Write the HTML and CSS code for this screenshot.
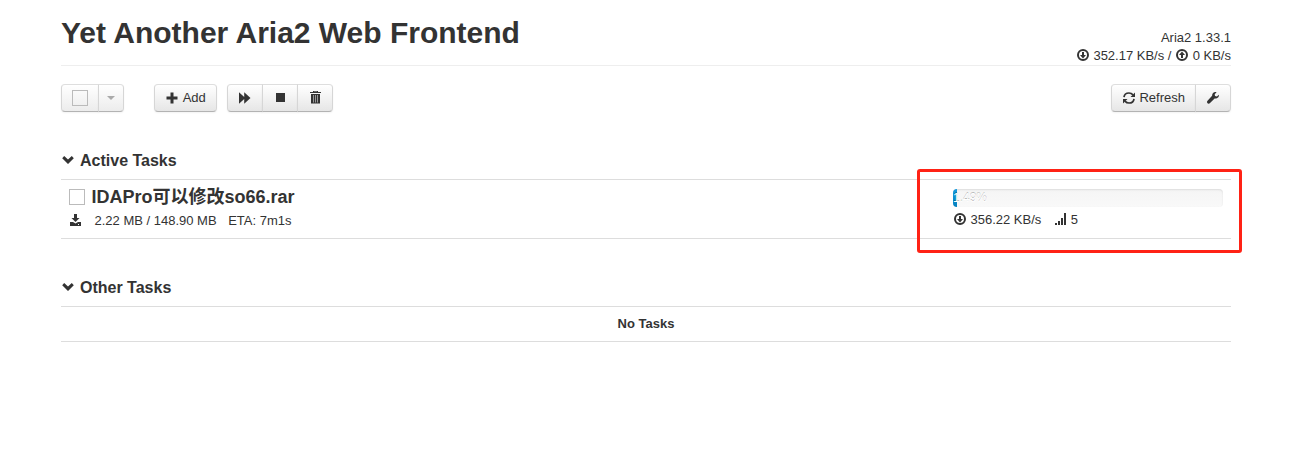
FILE: index.html
```
<!DOCTYPE html>
<html lang="en">
<head>
<meta charset="utf-8">
<title>Yet Another Aria2 Web Frontend</title>
<link rel="stylesheet" href="styles.css">
</head>
<body>
<svg class="defs" aria-hidden="true">
  <symbol id="down-circle" viewBox="0 0 14 14"><circle cx="7" cy="7" r="5" fill="none" stroke="currentColor" stroke-width="2"/><path d="M6 4h2v3h2l-3 3.400L4 7h2z"/></symbol>
  <symbol id="up-circle" viewBox="0 0 14 14"><circle cx="7" cy="7" r="5" fill="none" stroke="currentColor" stroke-width="2"/><path d="M6 10h2V7h2L7 3.600 4 7h2z"/></symbol>
  <symbol id="plus" viewBox="0 0 14 14"><path d="M5.500 1.500h3v4h4v3h-4v4h-3v-4h-4v-3h4z"/></symbol>
  <symbol id="forward" viewBox="0 0 14 14"><path d="M1 1.200 6.200 6V1.200L12.500 7l-6.300 5.800V8L1 12.800z"/></symbol>
  <symbol id="stop" viewBox="0 0 14 14"><path d="M3 2h9v9H3z"/></symbol>
  <symbol id="trash" viewBox="0 0 14 14"><path d="M5 0h5v1h3v1H2V1h3z"/><path fill="#eee" d="M6 .700h3V1H6z"/><path d="M3 3h9v9.500H3z"/><path d="M5.500 4v7.500M7.500 4v7.500M9.500 4v7.500" stroke="#999"/></symbol>
  <symbol id="refresh" viewBox="0 0 14 14"><path d="M2 6.200C2.300 3.500 4.500 2 7 2c1.700 0 3 .700 4 1.900M12 7.800C11.700 10.500 9.500 12 7 12c-1.700 0-3-.700-4-1.900" fill="none" stroke="currentColor" stroke-width="1.700"/><path d="M13 1.500V6H8.500zM1 12.500V8h4.500z"/></symbol>
  <symbol id="wrench" viewBox="0 0 14 14"><path d="M12.800 3.800 10.900 5.400 9 4.900 8.700 3.200 10.600 1.200C8.300.400 6 2 6.100 4.700L1.300 10c-1.100 1.500.900 3.600 2.500 2.300l4.800-4.800c2.800.300 4.800-1.500 4.200-3.700z"/></symbol>
  <symbol id="chevron" viewBox="0 0 14 14"><path d="m3.200 3 3.800 3.400L10.800 3l2 2.200L7 11 1.200 5.200z"/></symbol>
  <symbol id="download" viewBox="0 0 14 14"><path d="M6 1h3v4h2.500L7.500 9l-4-4H6z"/><path d="M2 9h3l2.500 1.500L10 9h3v4H2z"/><path fill="#fff" d="M10 11h1v1h-1z"/></symbol>
  <symbol id="signal" viewBox="0 0 14 14"><path d="M2 11h2v2H2zM5 9h2v4H5zM8 6h2v7H8zM11 1h2v12h-2z"/></symbol>
</svg>

<main class="container">
  <header class="page-header">
    <h1>Yet Another Aria2 Web Frontend</h1>
    <div class="stats">
      <div>Aria2 1.33.1</div>
      <div><svg class="icon"><use href="#down-circle"/></svg> 352.17 KB/s / <svg class="icon"><use href="#up-circle"/></svg> 0 KB/s</div>
    </div>
  </header>

  <nav class="toolbar">
    <div class="btn-group select disabled">
      <button class="btn"><span class="checkbox"></span></button>
      <button class="btn"><span class="caret"></span></button>
    </div>
    <div class="btn-group add"><button class="btn"><svg class="icon"><use href="#plus"/></svg><span>Add</span></button></div>
    <div class="btn-group actions">
      <button class="btn"><svg class="icon"><use href="#forward"/></svg></button>
      <button class="btn"><svg class="icon"><use href="#stop"/></svg></button>
      <button class="btn"><svg class="icon"><use href="#trash"/></svg></button>
    </div>
    <div class="btn-group refresh">
      <button class="btn"><svg class="icon"><use href="#refresh"/></svg><span>Refresh</span></button>
      <button class="btn"><svg class="icon"><use href="#wrench"/></svg></button>
    </div>
  </nav>

  <section class="section active">
    <h2><svg class="icon"><use href="#chevron"/></svg><span>Active Tasks</span></h2>
    <div class="task">
      <div class="info">
        <div class="name"><span class="checkbox"></span><span class="filename">IDAPro可以修改so66.rar</span></div>
        <div class="meta"><svg class="icon"><use href="#download"/></svg><span class="size">2.22 MB / 148.90 MB</span><span class="eta">ETA: 7m1s</span></div>
      </div>
      <div class="transfer">
        <div class="progress"><div class="bar" style="width:1.49%"><span>1.49%</span></div></div>
        <div class="rate"><svg class="icon"><use href="#down-circle"/></svg><span class="speed">356.22 KB/s</span><svg class="icon"><use href="#signal"/></svg><span class="peers">5</span></div>
      </div>
      <div class="highlight"></div>
    </div>
  </section>

  <section class="section">
    <h2><svg class="icon"><use href="#chevron"/></svg><span>Other Tasks</span></h2>
    <div class="empty">No Tasks</div>
  </section>
</main>
</body>
</html>
```
FILE: styles.css
```
* { box-sizing: border-box; }
body { margin: 0; background: #fff; color: #333; font: 13px/18px "Liberation Sans", "Noto Sans CJK SC", sans-serif; }
.defs { position: absolute; width: 0; height: 0; }
.container { width: 1170px; margin-left: 61px; }
.icon { width: 14px; height: 14px; flex: none; fill: currentColor; vertical-align: -2px; }
.page-header { height: 66px; display: flex; justify-content: space-between; border-bottom: 1px solid #eee; }
h1 { margin: 15px 0 0; font-size: 30px; line-height: 36px; white-space: nowrap; }
.stats { padding-top: 29px; text-align: right; }

.toolbar { display: flex; margin-top: 18px; height: 28px; }
.btn-group { display: flex; }
.btn { height: 28px; display: flex; align-items: center; justify-content: center; padding: 0; border: 1px solid #ccc; border-color: #dedede #d6d6d6 #b3b3b3; background: linear-gradient(#fff, #e6e6e6); color: #333; font: inherit; box-shadow: inset 0 1px 0 #fff, 0 1px 2px rgba(0,0,0,.05); }
.btn + .btn { margin-left: -1px; }
.btn:first-child { border-radius: 4px 0 0 4px; }
.btn:last-child { border-radius: 0 4px 4px 0; }
.btn:only-child { border-radius: 4px; }
.select { margin-right: 30px; }
.select .btn:first-child { width: 38px; }
.select .btn:last-child { width: 26px; }
.select .btn { background: linear-gradient(#fff, #ececec); }
.checkbox { width: 16px; height: 16px; border: 1px solid #bbb; background: #fff; flex: none; }
.select .checkbox { background: transparent; }
.caret { border: 4px solid transparent; border-top-color: #aaa; border-bottom: 0; }
.add .btn { width: 63px; gap: 3.5px; }
.add { margin-right: 10px; }
.actions .btn { width: 36px; }
.refresh { margin-left: auto; }
.refresh .btn:first-child { width: 85px; gap: 3.5px; }
.refresh .btn:last-child { width: 36px; }

.section { margin-top: 39px; }
h2 { display: flex; align-items: center; gap: 5px; height: 18px; margin: 0 0 10px; font-size: 16px; line-height: 18px; }
h2 span { padding-top: 2px; }
.task { position: relative; height: 60px; display: flex; justify-content: space-between; padding: 9px 8px 0; border: solid #ddd; border-width: 1px 0; }
.name { display: flex; align-items: center; gap: 6.5px; height: 16px; }
.filename { font-size: 18px; font-weight: 700; white-space: nowrap; }
.meta { display: flex; align-items: center; height: 18px; margin: 6px 0 0 -1px; }
.meta span { padding-top: 2px; }
.size { margin-left: 12.5px; }
.eta { margin-left: 11.5px; }
.transfer { width: 270px; }
.progress { height: 18px; border-radius: 4px; overflow: hidden; background: linear-gradient(#f5f5f5, #f9f9f9); box-shadow: inset 0 1px 2px rgba(0,0,0,.1); }
.bar { height: 18px; background: linear-gradient(#149bdf, #0480be); color: #fff; font-size: 12px; line-height: 18px; text-shadow: 0 -1px 0 rgba(0,0,0,.25); white-space: nowrap; }
.rate { display: flex; align-items: center; height: 18px; margin-top: 3px; }
.rate span { padding-top: 2px; }
.speed { margin: 0 12px 0 3.5px; }
.peers { margin-left: 3.5px; }
.highlight { position: absolute; left: 856px; top: -11px; width: 325px; height: 84px; border: 3px solid #ff2215; border-radius: 3px; pointer-events: none; }
.empty { height: 36px; border: solid #ddd; border-width: 1px 0; text-align: center; font-weight: 700; line-height: 34px; }
```
